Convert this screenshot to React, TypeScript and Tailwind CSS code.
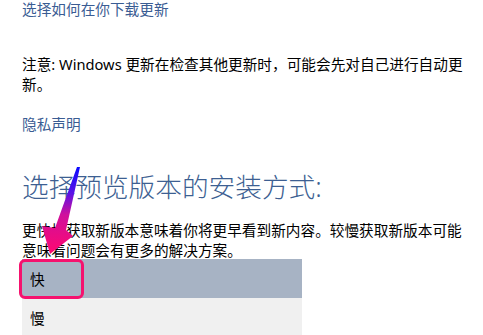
import React from "react";

const Arrow = () => (
  <svg
    className="pointer-events-none absolute left-0 top-0"
    width="120"
    height="270"
    viewBox="0 0 120 270"
  >
    <defs>
      <linearGradient id="arrowGrad" x1="0" y1="167" x2="0" y2="254" gradientUnits="userSpaceOnUse">
        <stop offset="0" stopColor="#0a0aff" />
        <stop offset="0.3" stopColor="#5a12e6" />
        <stop offset="0.55" stopColor="#d0109c" />
        <stop offset="1" stopColor="#ff0870" />
      </linearGradient>
    </defs>
    <polygon
      points="77,167 80,167 66,230 73,236 50,254 42,226 55,228"
      fill="url(#arrowGrad)"
    />
  </svg>
);

export default function App() {
  return (
    <div
      className="relative h-[335px] w-[483px] overflow-hidden bg-white text-[14.67px] leading-[20px] text-black"
      style={{ fontFamily: '"Noto Sans", "Noto Sans CJK SC", sans-serif' }}
    >
      <div className="-mt-[1px] pl-[22px]">
        {/* download link */}
        <div className="text-[#3a5c93]">选择如何在你下载更新</div>

        {/* note */}
        <p className="mt-[35px] pr-[10px]">
          注意: Windows 更新在检查其他更新时，可能会先对自己进行自动更新。
        </p>

        <div className="mt-[20px] text-[#3a5c93]">隐私声明</div>

        {/* section heading */}
        <h2 className="mt-[36px] text-[26.67px] font-light leading-[34px] text-[#3d5f92]">
          选择预览版本的安装方式:
        </h2>

        <p className="mt-[16px] pr-[16px]">
          更快地获取新版本意味着你将更早看到新内容。较慢获取新版本可能意味着问题会有更多的解决方案。
        </p>

        {/* options list */}
        <div className="-mt-[1px] w-[280px]">
          <div className="relative flex h-[39px] items-center bg-[#a7b3c4] pl-[8px]">
            快
            <div className="absolute -left-[3px] top-0 h-[40px] w-[65px] rounded-[6px] border-[3px] border-[#f5126e]" />
          </div>
          <div className="flex h-[39px] items-center bg-[#f0f0f0] pl-[8px]">慢</div>
        </div>
      </div>

      <Arrow />
    </div>
  );
}
